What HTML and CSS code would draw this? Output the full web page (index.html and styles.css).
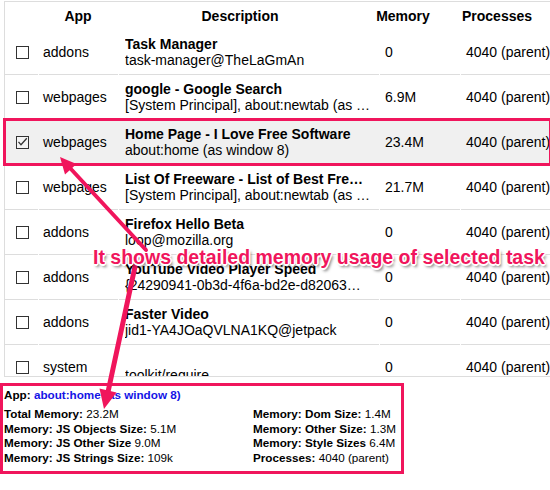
FILE: index.html
```html
<!DOCTYPE html>
<html>
<head>
<meta charset="utf-8">
<link rel="stylesheet" href="styles.css">
</head>
<body>
<div class="tasks">
  <div class="thead">
    <div></div>
    <div>App</div>
    <div>Description</div>
    <div>Memory</div>
    <div>Processes</div>
  </div>
  <div class="row">
    <div class="cell c-check"><span class="cb"></span></div>
    <div class="cell c-app">addons</div>
    <div class="cell c-desc"><div class="title">Task Manager</div><div class="sub">task-manager@TheLaGmAn</div></div>
    <div class="cell c-num">0</div>
    <div class="cell c-num">4040 (parent)</div>
  </div>
  <div class="row">
    <div class="cell c-check"><span class="cb"></span></div>
    <div class="cell c-app">webpages</div>
    <div class="cell c-desc"><div class="title">google - Google Search</div><div class="sub">[System Principal], about:newtab (as …</div></div>
    <div class="cell c-num">6.9M</div>
    <div class="cell c-num">4040 (parent)</div>
  </div>
  <div class="row selected">
    <div class="cell c-check"><span class="cb checked"><svg width="11" height="11" viewBox="0 0 11 11"><polyline points="1.5,4.8 4,7.8 9.8,1.3" fill="none" stroke="#333" stroke-width="1.3"/></svg></span></div>
    <div class="cell c-app">webpages</div>
    <div class="cell c-desc"><div class="title">Home Page - I Love Free Software</div><div class="sub">about:home (as window 8)</div></div>
    <div class="cell c-num">23.4M</div>
    <div class="cell c-num">4040 (parent)</div>
  </div>
  <div class="row">
    <div class="cell c-check"><span class="cb"></span></div>
    <div class="cell c-app">webpages</div>
    <div class="cell c-desc"><div class="title">List Of Freeware - List of Best Fre…</div><div class="sub">[System Principal], about:newtab (as …</div></div>
    <div class="cell c-num">21.7M</div>
    <div class="cell c-num">4040 (parent)</div>
  </div>
  <div class="row">
    <div class="cell c-check"><span class="cb"></span></div>
    <div class="cell c-app">addons</div>
    <div class="cell c-desc"><div class="title">Firefox Hello Beta</div><div class="sub">loop@mozilla.org</div></div>
    <div class="cell c-num">0</div>
    <div class="cell c-num">4040 (parent)</div>
  </div>
  <div class="row">
    <div class="cell c-check"><span class="cb"></span></div>
    <div class="cell c-app">addons</div>
    <div class="cell c-desc"><div class="title">YouTube Video Player Speed</div><div class="sub">{24290941-0b3d-4f6a-bd2e-d82063…</div></div>
    <div class="cell c-num">0</div>
    <div class="cell c-num">4040 (parent)</div>
  </div>
  <div class="row">
    <div class="cell c-check"><span class="cb"></span></div>
    <div class="cell c-app">addons</div>
    <div class="cell c-desc"><div class="title">Faster Video</div><div class="sub">jid1-YA4JOaQVLNA1KQ@jetpack</div></div>
    <div class="cell c-num">0</div>
    <div class="cell c-num">4040 (parent)</div>
  </div>
  <div class="row">
    <div class="cell c-check"><span class="cb"></span></div>
    <div class="cell c-app">system</div>
    <div class="cell c-desc"><div class="title">&nbsp;</div><div class="sub">toolkit/require</div></div>
    <div class="cell c-num">0</div>
    <div class="cell c-num">4040 (parent)</div>
  </div>
</div>

<div class="details">
  <div class="app-line"><b>App:</b> <span class="app-name">about:home (as window 8)</span></div>
  <div class="stats">
    <div><b>Total Memory:</b> 23.2M</div>
    <div><b>Memory: Dom Size:</b> 1.4M</div>
    <div><b>Memory: JS Objects Size:</b> 5.1M</div>
    <div><b>Memory: Other Size:</b> 1.3M</div>
    <div><b>Memory: JS Other Size</b> 9.0M</div>
    <div><b>Memory: Style Sizes</b> 6.4M</div>
    <div><b>Memory: JS Strings Size:</b> 109k</div>
    <div><b>Processes:</b> 4040 (parent)</div>
  </div>
</div>

<svg class="annot" width="550" height="490" viewBox="0 0 550 490">
  <rect x="4.5" y="119.5" width="546" height="45" fill="none" stroke="#f0155c" stroke-width="3"/>
  <line x1="146" y1="250" x2="70" y2="168" stroke="#f0155c" stroke-width="4" stroke-linecap="round"/>
  <polygon points="60,157 76.5,164 65,174.5" fill="#f0155c"/>
  <line x1="136" y1="262" x2="108" y2="392" stroke="#f0155c" stroke-width="5" stroke-linecap="round"/>
  <polygon points="104,409 116.5,392.5 99.5,388.5" fill="#f0155c"/>
</svg>

<div class="callout">It shows detailed memory usage of selected task</div>
</body>
</html>
```

FILE: styles.css
```css
* { box-sizing: border-box; }

html, body {
  margin: 0;
  padding: 0;
  width: 550px;
  height: 490px;
  overflow: hidden;
  background: #fff;
}

body {
  position: relative;
  font-family: "Liberation Sans", Arial, sans-serif;
  font-size: 14px;
  color: #000;
}

.tasks {
  margin: 1px 0 0 4px;
  width: 546px;
  height: 376px;
  border-top: 1px solid #ddd;
  border-left: 1px solid #ddd;
  border-bottom: 1px solid #ddd;
  overflow: hidden;
}

.thead {
  display: grid;
  grid-template-columns: 33px 80px 244px 82px 106px;
  height: 28px;
  padding-top: 1px;
  line-height: 27px;
  font-weight: bold;
  text-align: center;
  white-space: nowrap;
}

.row {
  display: grid;
  grid-template-columns: 33px 79px 260px 80px 1fr;
  column-gap: 1px;
  height: 45px;
}

.row.selected {
  background: #f0f0f0;
}

.cell {
  display: flex;
  align-items: center;
  border-bottom: 1px solid #ddd;
  white-space: nowrap;
  overflow: hidden;
  line-height: 16px;
}

.c-check {
  justify-content: center;
  padding-left: 1px;
}

.cb {
  display: flex;
  align-items: center;
  justify-content: center;
  width: 13px;
  height: 13px;
  border: 1px solid #333;
  background: #fff;
}

.cb.checked {
  background: #f4f4f4;
}

.c-app {
  padding-left: 4px;
}

.c-desc {
  flex-direction: column;
  align-items: stretch;
  justify-content: center;
  padding: 0 4px 0 6px;
}

.c-desc .title,
.c-desc .sub {
  white-space: nowrap;
  overflow: hidden;
  text-overflow: ellipsis;
}

.c-desc .title {
  font-weight: bold;
}

.c-num {
  padding-left: 5px;
  overflow: visible;
}

.details {
  margin-top: 6px;
  width: 404px;
  height: 91px;
  border: 3px solid #f0155c;
  padding: 1px 0 0 1px;
  font-size: 11.7px;
  line-height: 15px;
  color: #000;
  white-space: nowrap;
}

.app-name {
  color: #1414e6;
  font-weight: bold;
}

.stats {
  margin-top: 5px;
  display: grid;
  grid-template-columns: 249px 1fr;
  line-height: 14.67px;
}

.annot {
  position: absolute;
  left: 0;
  top: 0;
  pointer-events: none;
}

.callout {
  position: absolute;
  left: 93px;
  top: 247px;
  font-size: 19.5px;
  line-height: 20px;
  font-weight: bold;
  color: #f0155c;
  white-space: nowrap;
  text-shadow:
    -1px -1px 0 #fff, 1px -1px 0 #fff, -1px 1px 0 #fff, 1px 1px 0 #fff,
    0 -1.5px 0 #fff, 0 1.5px 0 #fff, -1.5px 0 0 #fff, 1.5px 0 0 #fff,
    2px 3px 3px rgba(0, 0, 0, 0.55);
}
```
